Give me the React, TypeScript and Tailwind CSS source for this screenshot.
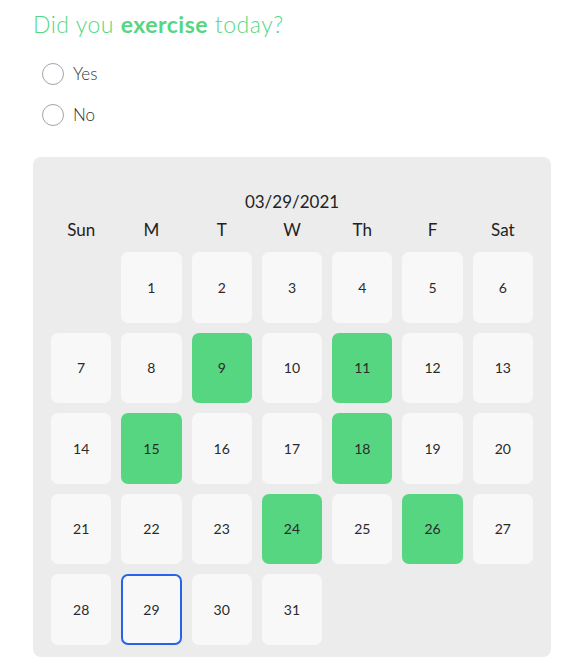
import React from "react";

const green = new Set([9, 11, 15, 18, 24, 26]);
const headers = ["Sun", "M", "T", "W", "Th", "F", "Sat"];

export default function App() {
  const cells: (number | null)[] = [null];
  for (let i = 1; i <= 31; i++) cells.push(i);
  return (
    <div
      className="min-h-[658px] bg-white pl-[33px] pt-[8px] w-[579px]"
      style={{ fontFamily: "Lato, 'Liberation Sans', sans-serif" }}
    >
      <h1 className="text-[23px] leading-[33px] font-light tracking-[0.5px] text-[#57d682]">
        Did you <span className="font-bold">exercise</span> today?
      </h1>
      <div className="mt-[22px] flex flex-col gap-[19px] pl-[9px]">
        {["Yes", "No"].map((l) => (
          <label key={l} className="flex items-center gap-[9px] h-[22px]">
            <span className="w-[22px] h-[22px] rounded-full border border-[#a0a4ad] bg-white" />
            <span className="text-[17px] font-light text-[#333]">{l}</span>
          </label>
        ))}
      </div>
      <div className="mt-[31px] w-[518px] rounded-lg bg-[#ececec] px-[18px] pt-[33px] pb-[12px]">
        <div className="text-center text-[17px] leading-[24px] text-[#222]">03/29/2021</div>
        <div className="mt-[4px] grid grid-cols-7 gap-x-[10px]">
          {headers.map((h) => (
            <div key={h} className="text-center text-[17px] leading-[24px] text-[#222]">
              {h}
            </div>
          ))}
        </div>
        <div className="mt-[10px] grid grid-cols-7 gap-[10px]">
          {cells.map((d, i) =>
            d === null ? (
              <div key={i} />
            ) : (
              <div
                key={i}
                className={
                  "h-[70.5px] rounded-[7px] flex items-center justify-center text-[14px] font-normal text-[#2a2a2a] " +
                  (green.has(d)
                    ? "bg-[#57d682]"
                    : d === 29
                    ? "bg-[#f8f8f8] border-2 border-[#2563eb]"
                    : "bg-[#f8f8f8]")
                }
              >
                {d}
              </div>
            )
          )}
        </div>
      </div>
    </div>
  );
}
